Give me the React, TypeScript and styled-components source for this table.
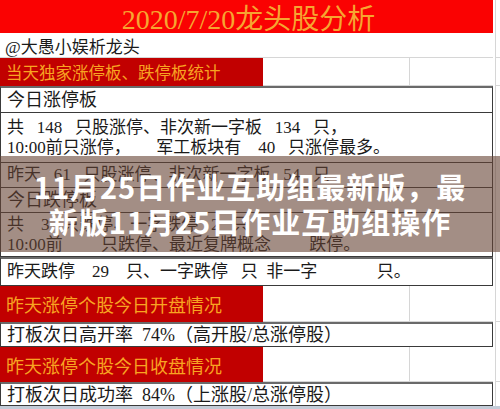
import React from "react";
import styled, { createGlobalStyle } from "styled-components";

const GlobalStyle = createGlobalStyle`
  html, body { margin: 0; padding: 0; background: #fff; }
  #root { width: 500px; height: 409px; }
`;

const Sheet = styled.div`
  position: relative;
  width: 500px;
  height: 409px;
  overflow: hidden;
  background: #fff;
  font-family: "Liberation Serif", "Noto Sans CJK SC", serif;
  color: #1a1a1a;
`;

const Row = styled.div<{ $h: number }>`
  display: flex;
  height: ${(p) => p.$h}px;
`;

const Tail = styled.div<{ $grid?: boolean }>`
  flex: 1;
  margin-left: 2px;
  border-left: 1px solid #d6d6d6;
  box-sizing: border-box;
  border-bottom: ${(p) => (p.$grid ? "1px solid #d6d6d6" : "none")};
`;

const TitleCell = styled.div`
  width: 493px;
  background: #fa0202;
  color: #f6a531;
  font-size: 28px;
  display: flex;
  align-items: center;
  justify-content: center;
  padding-left: 4px;
  box-sizing: border-box;
`;

const PlainCell = styled.div`
  width: 493px;
  box-sizing: border-box;
  border-bottom: 1px solid #d6d6d6;
  display: flex;
  align-items: center;
  padding-left: 5px;
  font-size: 17px;
`;

const SectionCells = styled.div`
  width: 493px;
  display: flex;
`;

const RedLabel = styled.div<{ $size: number }>`
  width: 263px;
  background: #c10000;
  color: #f8a422;
  font-size: ${(p) => p.$size}px;
  display: flex;
  align-items: center;
  padding-left: 6px;
  box-sizing: border-box;
`;

const BlankCell = styled.div<{ $w: number }>`
  width: ${(p) => p.$w}px;
  box-sizing: border-box;
  border-right: 1px solid #d6d6d6;
  border-bottom: 1px solid #d6d6d6;
  &:last-child { border-right: none; }
`;

const Box = styled.div<{ $top?: boolean; $size?: number }>`
  width: 493px;
  box-sizing: border-box;
  border-left: 1px solid #3a3a3a;
  border-right: 1px solid #3a3a3a;
  border-bottom: 1px solid #3a3a3a;
  border-top: ${(p) => (p.$top ? "2px solid #6a6a6a" : "none")};
  padding-left: 6px;
  font-size: ${(p) => p.$size ?? 17}px;
  display: flex;
  flex-direction: column;
  justify-content: center;
  white-space: pre;
  line-height: 20px;
`;

const Line = styled.div``;

const BottomStrip = styled.div`
  height: 3px;
  background: #c3ccd8;
`;

const Overlay = styled.div`
  position: absolute;
  left: 0;
  right: 0;
  top: 156px;
  height: 96px;
  background: rgba(101, 67, 52, 0.6);
  display: flex;
  flex-direction: column;
  align-items: center;
  justify-content: center;
  color: #fff;
  font-family: "Noto Sans CJK SC", "Noto Sans", sans-serif;
  font-weight: 700;
  font-size: 29px;
  letter-spacing: 1px;
  line-height: 35px;
`;

const Section = ({ text, h, size }: { text: string; h: number; size: number }) => (
  <Row $h={h}>
    <SectionCells>
      <RedLabel $size={size}>{text}</RedLabel>
      <BlankCell $w={147} />
      <BlankCell $w={83} />
    </SectionCells>
    <Tail $grid />
  </Row>
);

export default function App() {
  return (
    <>
      <GlobalStyle />
      <Sheet>
        <Row $h={33}>
          <TitleCell>2020/7/20龙头股分析</TitleCell>
          <Tail />
        </Row>
        <Row $h={25}>
          <PlainCell>@大愚小娱析龙头</PlainCell>
          <Tail $grid />
        </Row>
        <Section text="当天独家涨停板、跌停板统计" h={28} size={16.5} />
        <Row $h={27}>
          <Box $top $size={18}>今日涨停板</Box>
          <Tail />
        </Row>
        <Row $h={50}>
          <Box>
            <Line>{"共   148   只股涨停、非次新一字板   134   只，"}</Line>
            <Line>{"10:00前只涨停，      军工板块有    40   只涨停最多。"}</Line>
          </Box>
          <Tail />
        </Row>
        <Row $h={25}>
          <Box>{"昨天   61   只股涨停、非次新一字板   54   只"}</Box>
          <Tail />
        </Row>
        <Row $h={25}>
          <Box $size={18}>今日跌停板</Box>
          <Tail />
        </Row>
        <Row $h={44}>
          <Box>
            <Line>{"共    3   只跌停、一字跌停   2   只"}</Line>
            <Line>{"10:00前         只跌停、最近复牌概念         跌停。"}</Line>
          </Box>
          <Tail />
        </Row>
        <Row $h={29}>
          <Box $top>{"昨天跌停    29    只、一字跌停   只  非一字              只。"}</Box>
          <Tail />
        </Row>
        <Section text="昨天涨停个股今日开盘情况" h={36} size={18} />
        <Row $h={25}>
          <Box $top $size={18}>{"打板次日高开率  74%（高开股/总涨停股）"}</Box>
          <Tail />
        </Row>
        <Section text="昨天涨停个股今日收盘情况" h={35} size={18} />
        <Row $h={24}>
          <Box $top $size={18}>{"打板次日成功率  84%（上涨股/总涨停股）"}</Box>
          <Tail />
        </Row>
        <BottomStrip />
        <Overlay>
          <div>11月25日作业互助组最新版，最</div>
          <div>新版11月25日作业互助组操作</div>
        </Overlay>
      </Sheet>
    </>
  );
}
